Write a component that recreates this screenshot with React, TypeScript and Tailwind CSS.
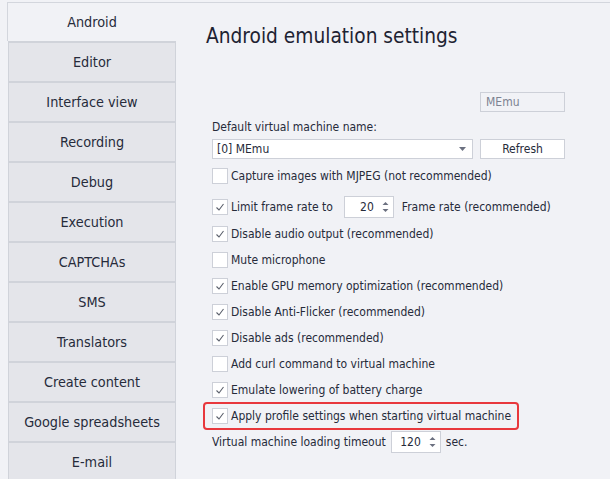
import React from "react";

const tabs = [
  "Editor",
  "Interface view",
  "Recording",
  "Debug",
  "Execution",
  "CAPTCHAs",
  "SMS",
  "Translators",
  "Create content",
  "Google spreadsheets",
  "E-mail",
];

function Check({ checked }: { checked: boolean }) {
  return (
    <span className="w-[16px] h-[16px] shrink-0 bg-white border border-[#cdd0d8] flex items-center justify-center">
      {checked && (
        <svg width="14" height="14" viewBox="0 0 14 14">
          <polyline points="3.5,7.5 6,10 10.5,4" fill="none" stroke="#5a5f6b" strokeWidth="1.1" />
        </svg>
      )}
    </span>
  );
}

function CheckRow({ checked, label, className = "" }: { checked: boolean; label: string; className?: string }) {
  return (
    <div className={`flex items-center h-[26px] gap-[3px] whitespace-nowrap ${className}`}>
      <Check checked={checked} />
      <span>{label}</span>
    </div>
  );
}

function Spinner({ value, w }: { value: string; w: string }) {
  return (
    <div className={`${w} h-[22px] bg-white border border-[#cdd0d8] flex items-center justify-end pr-[4px] gap-[8px]`}>
      <span>{value}</span>
      <svg width="7" height="14" viewBox="0 0 7 14">
        <path d="M0.5 5 L3.5 2 L6.5 5 Z" fill="#6b7080" />
        <path d="M0.5 9 L3.5 12 L6.5 9 Z" fill="#6b7080" />
      </svg>
    </div>
  );
}

export default function App() {
  return (
    <div
      className="w-[610px] h-[479px] bg-[#f1f2f6] overflow-hidden text-[#262b3a]"
      style={{ fontFamily: '"DejaVu Sans Condensed", "Noto Sans", sans-serif' }}
    >
      <div className="ml-[7px] mt-[2px] border-t border-[#d3d6dd] flex h-full">
        {/* tab column */}
        <div className="w-[169px] flex flex-col shrink-0 text-[14.3px]">
          <div className="h-[41px] pt-[2px] border-l border-[#d3d6dd] flex items-center justify-center">
            Android
          </div>
          {tabs.map((t) => (
            <div
              key={t}
              className="ml-[1px] w-[168px] h-[40px] pt-[2px] shrink-0 bg-[#e4e5ea] border-t-2 border-x border-[#d0d3da] flex items-center justify-center"
            >
              {t}
            </div>
          ))}
        </div>

        {/* settings panel */}
        <div className="flex-1 pl-[30px] text-[12px]">
          <h1 className="text-[20.7px] leading-[28px] mt-[19px] text-[#1e2332]">Android emulation settings</h1>

          <div className="pl-[6px] pr-[46px]">
            <div className="flex justify-end mt-[42px]">
              <div className="w-[85px] h-[20px] border border-[#cdd0d8] flex items-center px-[5px] text-[#7c8291]">
                MEmu
              </div>
            </div>
            <div className="mt-[5px] h-[20px] flex items-center">Default virtual machine name:</div>
            <div className="flex gap-[7px] mt-[2px]">
              <div className="w-[261px] h-[20px] bg-white border border-[#cdd0d8] flex items-center px-[4px] justify-between">
                <span>[0] MEmu</span>
                <svg width="7" height="4" viewBox="0 0 7 4" className="mr-[2px]">
                  <path d="M0 0 L7 0 L3.5 4 Z" fill="#6b7080" />
                </svg>
              </div>
              <div className="w-[85px] h-[20px] bg-white border border-[#cdd0d8] flex items-center justify-center">
                Refresh
              </div>
            </div>

            <CheckRow checked={false} label="Capture images with MJPEG (not recommended)" className="mt-[4px]" />
            <div className="flex items-center h-[28px] mt-[4px] gap-[3px] whitespace-nowrap">
              <Check checked />
              <span>Limit frame rate to</span>
              <div className="ml-[8px] mr-[5px]">
                <Spinner value="20" w="w-[50px]" />
              </div>
              <span>Frame rate (recommended)</span>
            </div>
            <CheckRow checked label="Disable audio output (recommended)" />
            <CheckRow checked={false} label="Mute microphone" />
            <CheckRow checked label="Enable GPU memory optimization (recommended)" />
            <CheckRow checked label="Disable Anti-Flicker (recommended)" />
            <CheckRow checked label="Disable ads (recommended)" />
            <CheckRow checked={false} label="Add curl command to virtual machine" />
            <CheckRow checked label="Emulate lowering of battery charge" />
            <div className="relative">
              <CheckRow checked label="Apply profile settings when starting virtual machine" />
              <div className="absolute left-[-9px] top-[-1px] w-[316px] h-[28px] border-2 border-[#e8383d] rounded-[4px]" />
            </div>
            <div className="flex items-center h-[26px] whitespace-nowrap">
              <span>Virtual machine loading timeout</span>
              <div className="ml-[5px] mr-[5px]">
                <Spinner value="120" w="w-[50px]" />
              </div>
              <span>sec.</span>
            </div>
          </div>
        </div>
      </div>
    </div>
  );
}
